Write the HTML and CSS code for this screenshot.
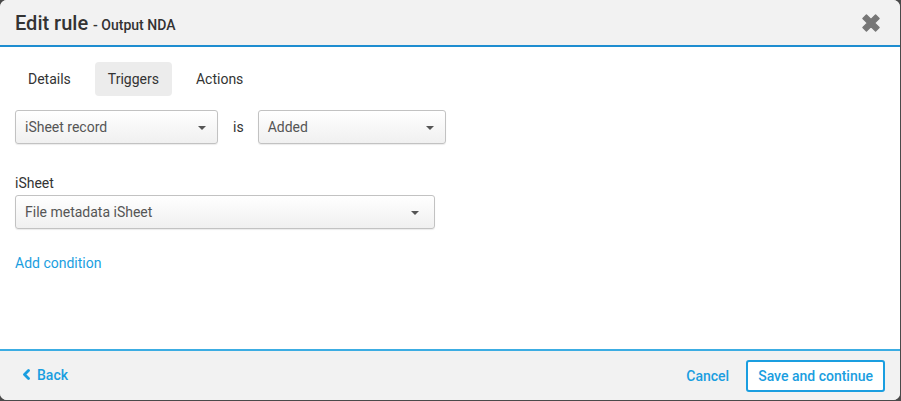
FILE: index.html
```html
<!DOCTYPE html>
<html>
<head>
<meta charset="utf-8">
<link rel="stylesheet" href="styles.css">
</head>
<body>
<div class="modal">
  <header class="modal-header">
    <h1 class="title">Edit rule <span class="subtitle">- Output NDA</span></h1>
    <button class="close" aria-label="Close">
      <svg width="24" height="24" viewBox="0 0 20 20"><path d="M3.3 6.2 L6.2 3.3 L10 7.1 L13.8 3.3 L16.7 6.2 L12.9 10 L16.7 13.8 L13.8 16.7 L10 12.9 L6.2 16.7 L3.3 13.8 L7.1 10 Z" fill="#777" stroke="#777" stroke-width="1.2" stroke-linejoin="round"/></svg>
    </button>
  </header>
  <main class="modal-body">
    <nav class="tabs">
      <span class="tab">Details</span>
      <span class="tab active">Triggers</span>
      <span class="tab">Actions</span>
    </nav>
    <div class="row">
      <div class="select w1"><span>iSheet record</span><i class="caret"></i></div>
      <span class="is">is</span>
      <div class="select w2"><span>Added</span><i class="caret"></i></div>
    </div>
    <div class="field">
      <label class="label">iSheet</label>
      <div class="select w3"><span>File metadata iSheet</span><i class="caret"></i></div>
    </div>
    <a class="link add">Add condition</a>
  </main>
  <footer class="modal-footer">
    <a class="link back">
      <svg width="9" height="11" viewBox="0 0 9 11"><path d="M6.5 1.5 L2.5 5.5 L6.5 9.5" fill="none" stroke="#1a9ee0" stroke-width="2.8" stroke-linecap="round" stroke-linejoin="round"/></svg>
      Back
    </a>
    <div class="actions">
      <a class="link cancel">Cancel</a>
      <button class="btn">Save and continue</button>
    </div>
  </footer>
</div>
</body>
</html>
```
FILE: styles.css
```css
* { box-sizing: border-box; }
html, body { margin: 0; padding: 0; }
body {
  background: #4a4a4a;
  font-family: Roboto, "Liberation Sans", sans-serif;
  width: 901px;
  height: 401px;
  overflow: hidden;
}
.modal {
  width: 900px;
  height: 400px;
  background: #fff;
  border-radius: 7px;
  overflow: hidden;
  display: flex;
  flex-direction: column;
}
.modal-header {
  height: 47px;
  background: #f2f2f2;
  border-bottom: 2px solid #1e8dd0;
  display: flex;
  align-items: center;
  justify-content: space-between;
  padding: 0 15px 0 15px;
}
.title {
  margin: 0;
  font-size: 20px;
  font-weight: 500;
  color: #333;
  letter-spacing: 0;
}
.subtitle {
  font-size: 14px;
  font-weight: 500;
}
.close {
  border: 0;
  background: none;
  padding: 0;
  margin-right: 2px;
  margin-top: 1px;
  display: flex;
}
.modal-body {
  flex: 1;
  padding: 15px 15px 0 15px;
  display: flex;
  flex-direction: column;
  align-items: flex-start;
}
.tabs {
  display: flex;
  gap: 11px;
  margin-bottom: 16px;
}
.tab {
  font-size: 14px;
  color: #333;
  padding: 8px 13px;
  height: 34px;
  line-height: 18px;
  border-radius: 4px;
}
.tab.active { background: #ececec; }
.row {
  display: flex;
  align-items: center;
  margin-top: -2px;
}
.select {
  height: 34px;
  border: 1px solid #c2c2c2;
  border-radius: 3px;
  background: linear-gradient(#ffffff, #f0f0f0);
  box-shadow: 0 1px 1px rgba(0,0,0,0.08);
  display: flex;
  align-items: center;
  justify-content: space-between;
  padding: 0 11px 0 9px;
  font-size: 14px;
  color: #555;
}
.w1 { width: 203px; }
.w2 { width: 188px; }
.w3 { width: 420px; }
.w3 .caret { margin-right: 4px; }
.caret {
  width: 0;
  height: 0;
  border-left: 4.5px solid transparent;
  border-right: 4.5px solid transparent;
  border-top: 4.5px solid #555;
  margin-top: 1px;
}
.is {
  font-size: 14px;
  color: #333;
  margin: 0 14px 0 15px;
}
.field {
  margin-top: 30px;
  display: flex;
  flex-direction: column;
}
.label {
  font-size: 14px;
  color: #333;
  margin-bottom: 3px;
  line-height: 18px;
}
.link {
  color: #1a9ee0;
  font-size: 14px;
  text-decoration: none;
  cursor: pointer;
}
.add { margin-top: 26px; }
.modal-footer {
  height: 51px;
  background: #f2f2f2;
  border-top: 2px solid #3cade3;
  display: flex;
  align-items: center;
  justify-content: space-between;
  padding: 0 15px 0 22px;
}
.back {
  font-weight: 500;
  display: flex;
  align-items: center;
  gap: 6px;
  margin-top: -2px;
}
.actions {
  display: flex;
  align-items: center;
  gap: 17px;
}
.cancel { font-weight: 500; }
.btn {
  height: 32px;
  border: 2px solid #1a9ee0;
  border-radius: 3px;
  background: #fff;
  color: #1a9ee0;
  font-family: Roboto, "Liberation Sans", sans-serif;
  font-size: 14px;
  font-weight: 500;
  padding: 0 10px;
}
```
